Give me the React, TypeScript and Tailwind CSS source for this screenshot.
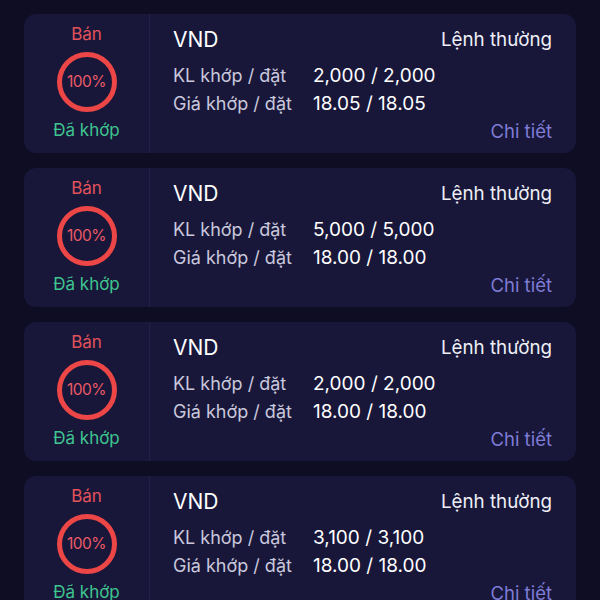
const orders = [
  { qty: "2,000 / 2,000", price: "18.05 / 18.05" },
  { qty: "5,000 / 5,000", price: "18.00 / 18.00" },
  { qty: "2,000 / 2,000", price: "18.00 / 18.00" },
  { qty: "3,100 / 3,100", price: "18.00 / 18.00" },
];

function Ring() {
  return (
    <div className="relative w-[60px] h-[60px] flex items-center justify-center">
      <svg className="absolute inset-0" width="60" height="60" viewBox="0 0 60 60">
        <circle cx="30" cy="30" r="27.5" fill="none" stroke="#ec4646" strokeWidth="5" />
      </svg>
      <span className="text-[15.5px] text-[#ec5a66] tracking-[-0.5px]">100%</span>
    </div>
  );
}

export default function App() {
  return (
    <div
      className="w-[600px] h-[600px] overflow-hidden bg-[#0e0d23] px-6 pt-[14px]"
      style={{ fontFamily: "Inter, 'Noto Sans', sans-serif" }}
    >
      <div className="flex flex-col gap-[15px]">
        {orders.map((o, i) => (
          <div key={i} className="flex h-[139px] shrink-0 rounded-xl bg-[#18173a]">
            {/* status */}
            <div className="w-[126px] shrink-0 flex flex-col items-center pt-2 border-r border-[#222044]">
              <div className="leading-6 text-[17px] text-[#e2535a]">Bán</div>
              <div className="mt-[6px]">
                <Ring />
              </div>
              <div className="mt-[6px] leading-6 text-[17px] text-[#3fc58f]">Đã khớp</div>
            </div>
            {/* details */}
            <div className="flex-1 flex flex-col pl-[23px] pr-6 pt-3">
              <div className="flex items-center justify-between leading-7">
                <span className="text-[21px] text-white">VND</span>
                <span className="text-[18.8px] text-[#eeeef6]">Lệnh thường</span>
              </div>
              <div className="mt-2 flex leading-7 text-[18px]">
                <span className="w-[140px] text-[#c9c8dc]">KL khớp / đặt</span>
                <span className="text-[19px] text-white">{o.qty}</span>
              </div>
              <div className="flex leading-7 text-[18px]">
                <span className="w-[140px] text-[#c9c8dc]">Giá khớp / đặt</span>
                <span className="text-[19px] text-white">{o.price}</span>
              </div>
              <div className="flex justify-end leading-[26px] text-[18.5px] text-[#7f7cd6]">Chi tiết</div>
            </div>
          </div>
        ))}
      </div>
    </div>
  );
}
